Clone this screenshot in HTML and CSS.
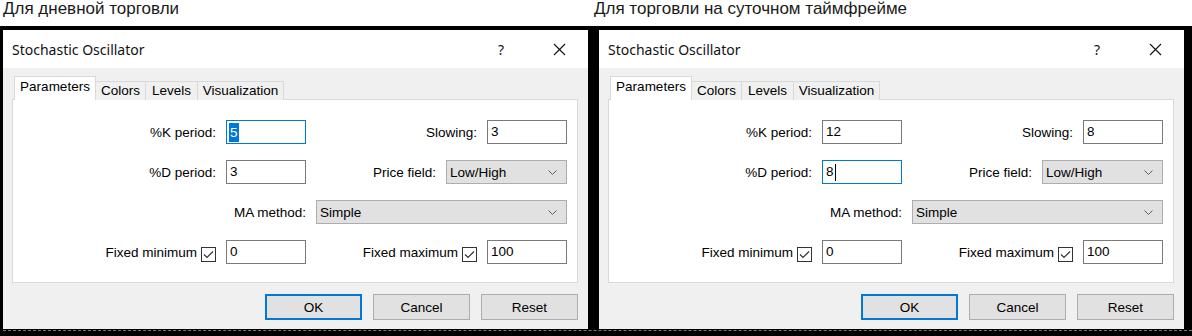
FILE: index.html
```html
<!DOCTYPE html>
<html lang="ru">

<head>
    <meta charset="UTF-8">
    <meta name="viewport" content="width=device-width, initial-scale=1.0">
    <title>Stochastic Oscillator</title>
    <link rel="stylesheet" href="styles.css">
</head>

<body>

    <div class="captions">
        <div class="caption">Для дневной торговли</div>
        <div class="caption">Для торговли на суточном таймфрейме</div>
    </div>

    <div class="stage">
        <div class="dialogs">

            <!-- дневная торговля -->
            <div class="dialog">
                <div class="titlebar">
                    <span class="title">Stochastic Oscillator</span>
                    <span class="tb-btn">?</span>
                    <span class="tb-btn">
                        <svg width="13" height="13" viewBox="0 0 13 13"><path d="M1 1L12 12M12 1L1 12" stroke="#111" stroke-width="1.1" fill="none"/></svg>
                    </span>
                </div>
                <div class="body">
                    <div class="tabs">
                        <div class="tab active">Parameters</div>
                        <div class="tab">Colors</div>
                        <div class="tab">Levels</div>
                        <div class="tab">Visualization</div>
                    </div>
                    <div class="panel">
                        <div class="row">
                            <div class="group left">
                                <span class="label">%K period:</span>
                                <div class="input focus"><span class="selected">5</span></div>
                            </div>
                            <div class="group">
                                <span class="label">Slowing:</span>
                                <div class="input">3</div>
                            </div>
                        </div>
                        <div class="row">
                            <div class="group left">
                                <span class="label">%D period:</span>
                                <div class="input">3</div>
                            </div>
                            <div class="group">
                                <span class="label">Price field:</span>
                                <div class="select short">Low/High
                                    <svg class="chevron" width="9" height="5" viewBox="0 0 9 5"><path d="M0.5 0.5L4.5 4.5L8.5 0.5" stroke="#606060" fill="none"/></svg>
                                </div>
                            </div>
                        </div>
                        <div class="row">
                            <div class="group">
                                <span class="label">MA method:</span>
                                <div class="select wide">Simple
                                    <svg class="chevron" width="9" height="5" viewBox="0 0 9 5"><path d="M0.5 0.5L4.5 4.5L8.5 0.5" stroke="#606060" fill="none"/></svg>
                                </div>
                            </div>
                        </div>
                        <div class="row">
                            <div class="group left">
                                <span class="check-label">Fixed minimum
                                    <span class="checkbox"><svg width="13" height="13" viewBox="0 0 13 13"><path d="M2 6.5L5 9.5L11 3.5" stroke="#333" stroke-width="1.2" fill="none"/></svg></span>
                                </span>
                                <div class="input">0</div>
                            </div>
                            <div class="group">
                                <span class="check-label">Fixed maximum
                                    <span class="checkbox"><svg width="13" height="13" viewBox="0 0 13 13"><path d="M2 6.5L5 9.5L11 3.5" stroke="#333" stroke-width="1.2" fill="none"/></svg></span>
                                </span>
                                <div class="input">100</div>
                            </div>
                        </div>
                    </div>
                    <div class="buttons">
                        <button class="default">OK</button>
                        <button>Cancel</button>
                        <button>Reset</button>
                    </div>
                </div>
            </div>

            <!-- суточный таймфрейм -->
            <div class="dialog">
                <div class="titlebar">
                    <span class="title">Stochastic Oscillator</span>
                    <span class="tb-btn">?</span>
                    <span class="tb-btn">
                        <svg width="13" height="13" viewBox="0 0 13 13"><path d="M1 1L12 12M12 1L1 12" stroke="#111" stroke-width="1.1" fill="none"/></svg>
                    </span>
                </div>
                <div class="body">
                    <div class="tabs">
                        <div class="tab active">Parameters</div>
                        <div class="tab">Colors</div>
                        <div class="tab">Levels</div>
                        <div class="tab">Visualization</div>
                    </div>
                    <div class="panel">
                        <div class="row">
                            <div class="group left">
                                <span class="label">%K period:</span>
                                <div class="input">12</div>
                            </div>
                            <div class="group">
                                <span class="label">Slowing:</span>
                                <div class="input">8</div>
                            </div>
                        </div>
                        <div class="row">
                            <div class="group left">
                                <span class="label">%D period:</span>
                                <div class="input focus">8<span class="caret"></span></div>
                            </div>
                            <div class="group">
                                <span class="label">Price field:</span>
                                <div class="select short">Low/High
                                    <svg class="chevron" width="9" height="5" viewBox="0 0 9 5"><path d="M0.5 0.5L4.5 4.5L8.5 0.5" stroke="#606060" fill="none"/></svg>
                                </div>
                            </div>
                        </div>
                        <div class="row">
                            <div class="group">
                                <span class="label">MA method:</span>
                                <div class="select wide">Simple
                                    <svg class="chevron" width="9" height="5" viewBox="0 0 9 5"><path d="M0.5 0.5L4.5 4.5L8.5 0.5" stroke="#606060" fill="none"/></svg>
                                </div>
                            </div>
                        </div>
                        <div class="row">
                            <div class="group left">
                                <span class="check-label">Fixed minimum
                                    <span class="checkbox"><svg width="13" height="13" viewBox="0 0 13 13"><path d="M2 6.5L5 9.5L11 3.5" stroke="#333" stroke-width="1.2" fill="none"/></svg></span>
                                </span>
                                <div class="input">0</div>
                            </div>
                            <div class="group">
                                <span class="check-label">Fixed maximum
                                    <span class="checkbox"><svg width="13" height="13" viewBox="0 0 13 13"><path d="M2 6.5L5 9.5L11 3.5" stroke="#333" stroke-width="1.2" fill="none"/></svg></span>
                                </span>
                                <div class="input">100</div>
                            </div>
                        </div>
                    </div>
                    <div class="buttons">
                        <button class="default">OK</button>
                        <button>Cancel</button>
                        <button>Reset</button>
                    </div>
                </div>
            </div>

        </div>
        <div class="grid-line"></div>
    </div>

</body>

</html>
```

FILE: styles.css
```css
body {
    margin: 0;
    background-color: #fff;
    font-family: 'Liberation Sans', Arial, sans-serif;
    color: #000;
}

.captions {
    display: flex;
    height: 26px;
    padding-left: 3px;
}

.caption {
    font-size: 17px;
    line-height: 18px;
    color: #1a1a1a;
}

.caption:first-child {
    width: 591px;
}

.stage {
    background-color: #000;
    height: 310px;
    padding: 4px 0 0 3px;
    box-sizing: border-box;
}

.dialogs {
    display: flex;
    gap: 11px;
}

.dialog {
    width: 585px;
    height: 299px;
    background-color: #f0f0f0;
    display: flex;
    flex-direction: column;
}

.titlebar {
    height: 38px;
    background-color: #fff;
    display: flex;
    align-items: center;
    gap: 12px;
    padding: 0 6px 0 9px;
}

.title {
    flex: 1;
    font-family: 'Noto Sans', sans-serif;
    font-size: 14px;
    color: #111;
}

.tb-btn {
    width: 46px;
    display: flex;
    justify-content: center;
    font-family: 'Noto Sans', sans-serif;
    font-size: 14px;
    color: #111;
}

.body {
    padding: 9px 10px 9px 9px;
    font-size: 13.5px;
}

.tabs {
    display: flex;
    align-items: flex-end;
    height: 23px;
    padding-left: 2px;
    position: relative;
    z-index: 1;
}

.tab {
    height: 19px;
    box-sizing: border-box;
    border: 1px solid #d9d9d9;
    border-bottom: none;
    border-left: none;
    line-height: 18px;
    text-align: center;
    background-color: #f0f0f0;
}

.tab:nth-child(2) { width: 50px; }
.tab:nth-child(3) { width: 52px; }
.tab:nth-child(4) { width: 86px; }

.tab.active {
    width: 82px;
    height: 24px;
    border-left: 1px solid #d9d9d9;
    background-color: #fff;
    line-height: 20px;
}

.panel {
    margin-top: -1px;
    height: 184px;
    box-sizing: border-box;
    background-color: #fff;
    border: 1px solid #d9d9d9;
    padding: 20px 10px 0 0;
    display: flex;
    flex-direction: column;
    gap: 16px;
}

.row {
    display: flex;
    height: 24px;
}

.group {
    flex: 1;
    display: flex;
    justify-content: flex-end;
    align-items: center;
    gap: 10px;
}

.group.left {
    flex: none;
    width: 293px;
}

.check-label {
    display: flex;
    align-items: center;
    gap: 4px;
}

.checkbox {
    width: 15px;
    height: 15px;
    box-sizing: border-box;
    border: 1px solid #333;
    background-color: #fff;
    display: flex;
    align-items: center;
    justify-content: center;
    margin-top: 4px;
}

.input {
    width: 80px;
    height: 24px;
    box-sizing: border-box;
    border: 1px solid #7a7a7a;
    background-color: #fff;
    line-height: 20px;
    padding-left: 3px;
    display: flex;
    align-items: center;
}

.input.focus {
    border-color: #0078d7;
}

.selected {
    background-color: #0078d7;
    color: #fff;
    line-height: 19px;
    padding: 0 1px;
    margin-left: -1px;
}

.caret {
    width: 1px;
    height: 17px;
    background-color: #000;
    margin-left: 1px;
}

.select {
    height: 24px;
    box-sizing: border-box;
    border: 1px solid #adadad;
    background-color: #e1e1e1;
    padding: 0 9px 0 3px;
    display: flex;
    align-items: center;
    justify-content: space-between;
}

.select.short {
    width: 121px;
}

.select.wide {
    width: 251px;
}

.buttons {
    display: flex;
    justify-content: flex-end;
    gap: 11px;
    margin-top: 11px;
}

.buttons button {
    width: 97px;
    height: 26px;
    border: 1px solid #adadad;
    background-color: #e1e1e1;
    font-family: 'Liberation Sans', Arial, sans-serif;
    font-size: 13.5px;
    color: #000;
    padding: 0;
}

.buttons button.default {
    border: 2px solid #0078d7;
}

.grid-line {
    margin-top: 1px;
    border-top: 1px dashed #777;
}
```
